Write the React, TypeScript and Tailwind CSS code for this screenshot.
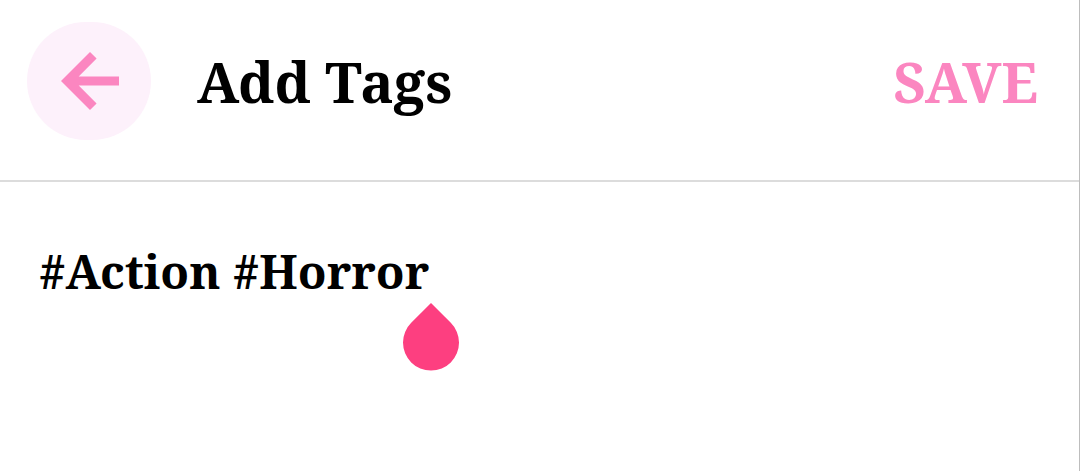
const SERIF = "font-['Noto_Serif','DejaVu_Serif','Liberation_Serif',serif]"

export default function App() {
  return (
    <div className={`h-[471px] w-[1080px] overflow-hidden border-r border-[#bdbdbd] bg-white ${SERIF}`}>
      {/* Header */}
      <header className="flex h-[182px] items-center border-b-2 border-[#dcdcdc] pb-[18px] pl-[27px] pr-[41px]">
        <button className="flex h-[118px] w-[124px] items-center justify-center rounded-full bg-[#fdf1fb] pl-[2px]">
          <svg width="58" height="58" viewBox="0 0 58 58">
            <path d="M0 29 L29 0 L35.6 6.5 L17.7 24.4 H58 V33.6 H17.7 L35.6 51.5 L29 58 Z" fill="#fb86c0" />
          </svg>
        </button>
        <h1 className="ml-[46px] text-[56px] font-bold leading-none text-black">Add Tags</h1>
        <span className="ml-auto text-[56px] font-bold leading-none text-[#fb86c0]">SAVE</span>
      </header>

      {/* Input */}
      <div className="relative pl-[39px] pt-[64px]">
        <p className="text-[47px] font-bold leading-[50px] text-black">#Action #Horror</p>
        <svg className="absolute left-[403px] top-[121px]" width="56" height="68" viewBox="0 0 56 68">
          <path d="M28 0 L8.2 19.8 A28 28 0 1 0 47.8 19.8 Z" fill="#fd3f80" />
        </svg>
      </div>
    </div>
  )
}
